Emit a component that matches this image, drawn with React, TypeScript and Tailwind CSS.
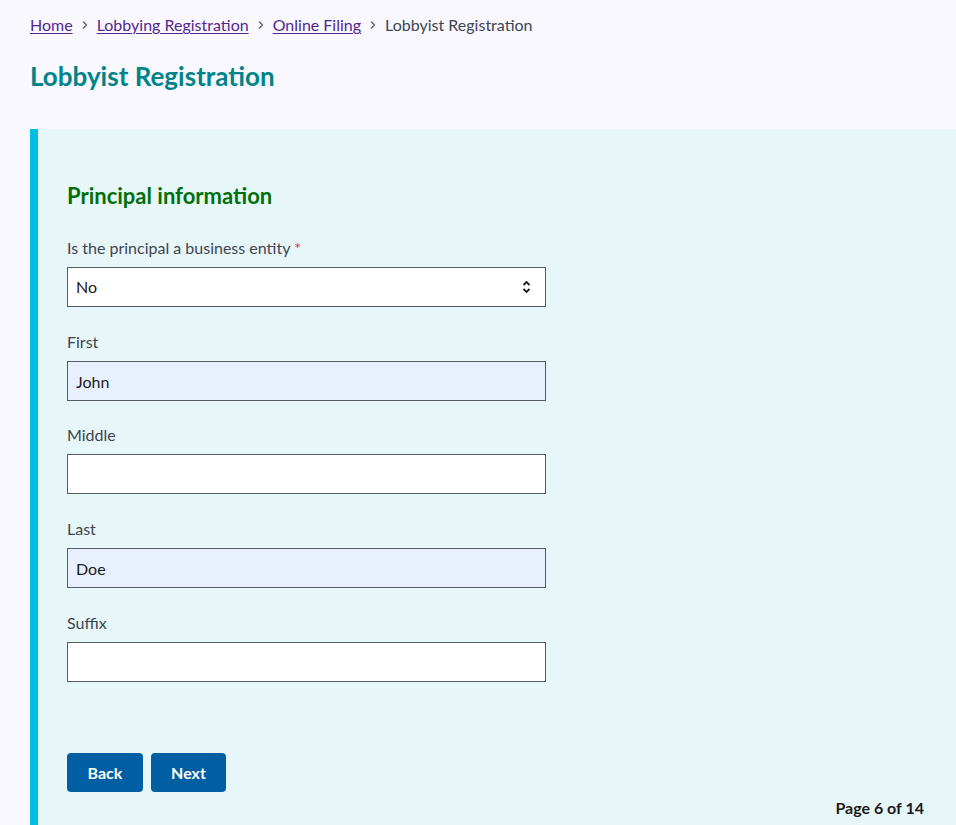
import { ChevronRight } from "lucide-react";

const font = { fontFamily: '"Source Sans Pro", Lato, "Noto Sans", sans-serif' };

const Field = ({ label, value, filled, tight }: { label: string; value?: string; filled?: boolean; tight?: boolean }) => (
  <div className={tight ? "mt-6" : "mt-[25px]"}>
    <label className="block text-[16px] leading-5 text-[#3d4551]">{label}</label>
    <input
      readOnly
      value={value || ""}
      className={`mt-[9px] block h-10 w-[479px] border border-[#565c65] px-2 text-[16px] text-[#1b1b1b] outline-none ${
        filled ? "bg-[#e8f0fe]" : "bg-white"
      }`}
    />
  </div>
);

export default function App() {
  return (
    <div className="min-h-[825px] overflow-hidden bg-[#f8f8fe]" style={font}>
      <div className="px-[30px] pt-[15px]">
        <nav className="flex items-center text-[16px] leading-5">
          <a className="text-[#54278f] underline underline-offset-2">Home</a>
          <ChevronRight className="mx-[6px] h-3 w-3 text-[#565c65]" strokeWidth={2.5} />
          <a className="text-[#54278f] underline underline-offset-2">Lobbying Registration</a>
          <ChevronRight className="mx-[6px] h-3 w-3 text-[#565c65]" strokeWidth={2.5} />
          <a className="text-[#54278f] underline underline-offset-2">Online Filing</a>
          <ChevronRight className="mx-[6px] h-3 w-3 text-[#565c65]" strokeWidth={2.5} />
          <span className="text-[#3d4551]">Lobbyist Registration</span>
        </nav>
        <h1 className="mt-[25px] text-[26px] font-bold leading-[32px] text-[#00838a]">
          Lobbyist Registration
        </h1>
      </div>

      <div className="ml-[30px] mt-[37px] border-l-[8px] border-[#00bde3] bg-[#e7f6f8] pb-[40px] pl-[29px] pr-[32px] pt-[54px]">
        <h2 className="text-[22px] font-bold leading-[26px] text-[#00700a]">Principal information</h2>

        <div className="mt-[29px]">
          <label className="block text-[16px] leading-5 text-[#3d4551]">
            Is the principal a business entity <span className="text-[#d83933]">*</span>
          </label>
          <div className="relative mt-[9px] flex h-10 w-[479px] items-center border border-[#565c65] bg-white px-2 text-[16px] text-[#1b1b1b]">
            No
            <svg
              className="absolute right-[14px] top-1/2 -translate-y-1/2"
              width="9"
              height="16"
              viewBox="0 0 9 16"
              fill="none"
              stroke="#1b1b1b"
              strokeWidth="1.8"
            >
              <path d="M1.5 6 L4.5 3 L7.5 6" />
              <path d="M1.5 10 L4.5 13 L7.5 10" />
            </svg>
          </div>
        </div>

        <Field label="First" value="John" filled />
        <Field label="Middle" tight />
        <Field label="Last" value="Doe" filled />
        <Field label="Suffix" />

        <div className="mt-[71px] flex gap-2">
          <button className="h-[39px] w-[76px] rounded bg-[#005ea2] text-[16px] font-bold text-white">Back</button>
          <button className="h-[39px] w-[75px] rounded bg-[#005ea2] text-[16px] font-bold text-white">Next</button>
        </div>

        <div className="mt-[6px] text-right text-[16px] font-bold leading-5 text-[#1b1b1b]">Page 6 of 14</div>
      </div>
    </div>
  );
}
